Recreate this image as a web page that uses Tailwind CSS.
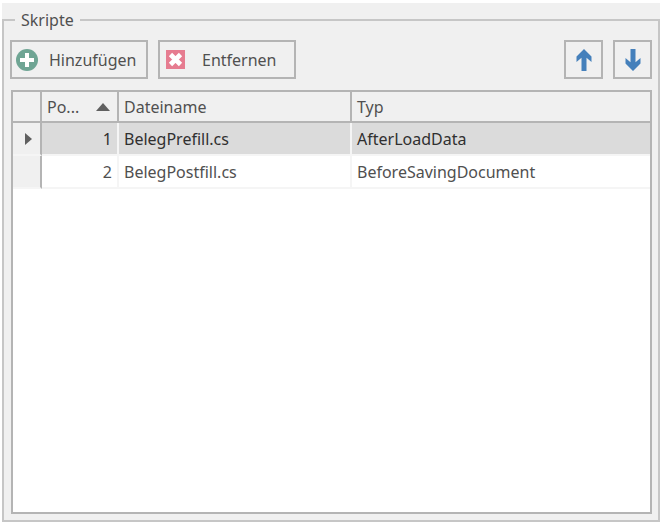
<!DOCTYPE html>
<html lang="de">
<head>
    <meta charset="UTF-8">
    <meta name="viewport" content="width=device-width, initial-scale=1.0">
    <title>Skripte</title>
    <script src="https://cdn.jsdelivr.net/npm/@tailwindcss/browser@4"></script>
</head>
<body class="bg-white font-['Noto_Sans',sans-serif] text-base text-[#505050]">

    <main class="flex flex-col h-screen pt-[3px] pl-[2px] pr-[6px]">
        <div class="flex flex-col flex-1 min-h-0 bg-[#f0f0f0] pt-[5px]">
            <fieldset class="flex-1 min-h-0 min-w-0 border-2 border-[#c6c6c6] px-[6px] pb-[6px]">
                <legend class="ml-[5px] px-[6px] leading-6">Skripte</legend>

                <div class="flex flex-col h-full">
                    <!-- Toolbar -->
                    <div class="flex items-center gap-[10px] pt-[8px]">
                        <button type="button" class="flex items-center w-[138px] h-[39px] pl-[4px] gap-[11px] border-2 border-[#b4b4b4]">
                            <svg class="w-[22px] h-[22px]" viewBox="0 0 22 22">
                                <circle cx="11" cy="11" r="11" fill="#6fa594"/>
                                <path d="M11 4v14M4 11h14" stroke="#fff" stroke-width="4"/>
                            </svg>
                            Hinzufügen
                        </button>
                        <button type="button" class="flex items-center w-[138px] h-[39px] pl-[6px] gap-[17px] border-2 border-[#b4b4b4]">
                            <svg class="w-[19px] h-[19px]" viewBox="0 0 19 19">
                                <rect width="19" height="19" fill="#e67c90"/>
                                <path d="M4.5 4.5l10 10M14.5 4.5l-10 10" stroke="#fff" stroke-width="4.6"/>
                            </svg>
                            Entfernen
                        </button>
                        <button type="button" aria-label="Nach oben" class="flex items-center justify-center ml-auto w-[39px] h-[39px] border-2 border-[#b4b4b4]">
                            <svg class="w-[16px] h-[22px]" viewBox="0 0 16 22" fill="#4580bb">
                                <path d="M8 0l7.5 7.5v5.5l-5-4.3V22h-5V8.700L.5 13V7.500z"/>
                            </svg>
                        </button>
                        <button type="button" aria-label="Nach unten" class="flex items-center justify-center w-[39px] h-[39px] border-2 border-[#b4b4b4]">
                            <svg class="w-[16px] h-[22px]" viewBox="0 0 16 22" fill="#4580bb">
                                <path d="M8 22l7.500-7.500V9l-5 4.300V0h-5v13.300L.5 9v5.500z"/>
                            </svg>
                        </button>
                    </div>

                    <!-- Script list -->
                    <div class="flex-1 min-h-0 mt-[11px] ml-px border-2 border-[#b4b4b4] bg-white">
                        <table class="w-full table-fixed border-separate border-spacing-0 text-left">
                            <colgroup>
                                <col class="w-[29px]">
                                <col class="w-[77px]">
                                <col class="w-[233px]">
                                <col>
                            </colgroup>
                            <thead>
                                <tr class="h-[31px] bg-[#f0f0f0] *:border-b-2 *:border-[#b4b4b4] *:p-0 *:font-normal">
                                    <th class="border-r-2"></th>
                                    <th class="border-r-2">
                                        <div class="flex items-center justify-between pl-[5px] pr-[7px]">
                                            Po...
                                            <svg class="w-[14px] h-[8px]" viewBox="0 0 14 8"><path d="M7 0l7 8H0z" fill="#606060"/></svg>
                                        </div>
                                    </th>
                                    <th class="border-r-2"><div class="pl-[5px]">Dateiname</div></th>
                                    <th><div class="pl-[5px]">Typ</div></th>
                                </tr>
                            </thead>
                            <tbody>
                                <tr class="h-[33px] bg-[#dbdbdb] text-[#303030] *:border-b-2 *:border-[#f5f5f5] *:p-0">
                                    <td class="border-r-2 border-r-[#b4b4b4]! bg-[#f0f0f0]">
                                        <svg class="w-[7px] h-[12px] ml-[12px]" viewBox="0 0 7 12"><path d="M0 0l7 6-7 6z" fill="#606060"/></svg>
                                    </td>
                                    <td class="border-r-2 text-right"><div class="pr-[5px]">1</div></td>
                                    <td class="border-r-2"><div class="pl-[5px]">BelegPrefill.cs</div></td>
                                    <td><div class="pl-[5px]">AfterLoadData</div></td>
                                </tr>
                                <tr class="h-[33px] *:border-b-2 *:border-[#f5f5f5] *:p-0">
                                    <td class="border-r-2 border-r-[#b4b4b4]! bg-[#f0f0f0]"></td>
                                    <td class="border-r-2 text-right"><div class="pr-[5px]">2</div></td>
                                    <td class="border-r-2"><div class="pl-[5px]">BelegPostfill.cs</div></td>
                                    <td><div class="pl-[5px]">BeforeSavingDocument</div></td>
                                </tr>
                            </tbody>
                        </table>
                    </div>
                </div>
            </fieldset>
        </div>
    </main>

</body>
</html>
